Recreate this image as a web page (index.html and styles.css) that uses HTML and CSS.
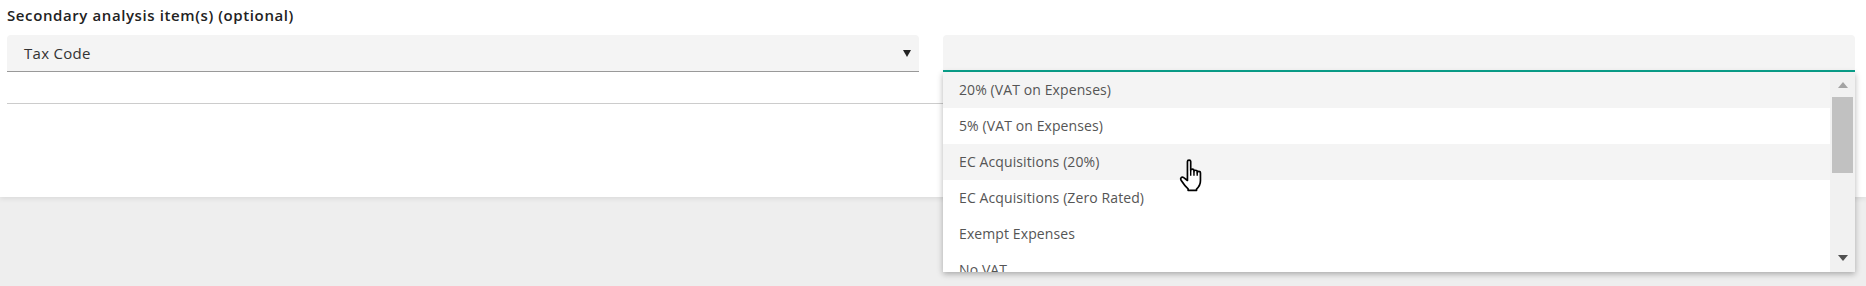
FILE: index.html
```html
<!DOCTYPE html>
<html>

<head>
    <title>Secondary analysis</title>
    <meta charset="utf-8">
    <link rel="stylesheet" href="styles.css">
</head>

<body>

    <div class="kort">
        <h2 class="titel">Secondary analysis item(s) (optional)</h2>

        <div class="felter">
            <div class="vaelg">
                <span>Tax Code</span>
                <span class="pil"></span>
            </div>

            <div class="soeg">
                <div class="soegefelt"></div>

                <div class="liste">
                    <ul>
                        <li class="markeret">20% (VAT on Expenses)</li>
                        <li>5% (VAT on Expenses)</li>
                        <li class="markeret">EC Acquisitions (20%)</li>
                        <li>EC Acquisitions (Zero Rated)</li>
                        <li>Exempt Expenses</li>
                        <li>No VAT</li>
                    </ul>
                    <div class="rulle">
                        <div class="op"></div>
                        <div class="greb"></div>
                        <div class="ned"></div>
                    </div>
                </div>
            </div>
        </div>

        <div class="linje"></div>
    </div>

    <!-- musemarkør -->
    <svg class="haand" width="26" height="34" viewBox="0 0 20 26">
        <path d="M6.5 2.6 C6.5 1.2 9 1.2 9 2.6 L9 9.6 C9 8.2 11.5 8.2 11.5 9.6 L11.5 10.4 C11.5 9 14 9 14 10.4 L14 11.2 C14 9.8 16.5 9.8 16.5 11.2 L16.5 17.5 C16.5 20.5 15 22.5 13.5 23.8 L13.5 24.8 L7 24.8 L7 23.6 C5.2 22 3.4 19.8 1.6 17 C0.6 15.4 2.2 14 3.6 15 L6.5 17.2 Z" fill="#fff" stroke="#000" stroke-width="1.3" stroke-linejoin="round" />
        <path d="M9 10 L9 13.5 M11.5 10.5 L11.5 13.5 M14 11.2 L14 13.5" stroke="#000" stroke-width="1.1" fill="none" />
    </svg>

</body>

</html>
```

FILE: styles.css
```css
body {
    margin: 0;
    background-color: #eeeeee;
    font-family: "Open Sans", Lato, sans-serif;
    position: relative;
    height: 286px;
    overflow: hidden;
}

.kort {
    background-color: #ffffff;
    height: 197px;
    box-sizing: border-box;
    padding: 0 11px 0 7px;
    box-shadow: 0 2px 5px rgba(0, 0, 0, 0.08);
}

.titel {
    margin: 0;
    padding-top: 5px;
    height: 30px;
    font-size: 15px;
    line-height: 20px;
    font-weight: 600;
    letter-spacing: 0.6px;
    color: #222;
}

.felter {
    display: grid;
    grid-template-columns: 1fr 1fr;
    column-gap: 24px;
}

.vaelg {
    height: 36px;
    background-color: #f4f4f4;
    border-bottom: 1px solid #999999;
    border-radius: 4px 4px 0 0;
    display: flex;
    align-items: center;
    justify-content: space-between;
    padding: 0 8px 0 17px;
    font-size: 15px;
    letter-spacing: 0.3px;
    color: #333;
}

.pil {
    width: 0;
    height: 0;
    border-left: 4.5px solid transparent;
    border-right: 4.5px solid transparent;
    border-top: 7px solid #222;
}

.soeg {
    position: relative;
}

.soegefelt {
    height: 35px;
    background-color: #f4f4f4;
    border-bottom: 2px solid #0aa38d;
    border-radius: 4px 4px 0 0;
}

.liste {
    position: absolute;
    top: 37px;
    left: 0;
    right: 0;
    height: 200px;
    background-color: #ffffff;
    box-shadow: 0 2px 6px rgba(0, 0, 0, 0.3);
    display: flex;
    z-index: 2;
}

.liste ul {
    flex: 1;
    margin: 0;
    padding: 0;
    list-style: none;
    overflow: hidden;
}

.liste li {
    height: 36px;
    line-height: 36px;
    padding-left: 16px;
    font-size: 14px;
    letter-spacing: 0.1px;
    color: #555555;
}

.markeret {
    background-color: #f4f4f4;
}

.rulle {
    width: 25px;
    background-color: #f1f1f1;
    display: flex;
    flex-direction: column;
    align-items: center;
}

.op {
    margin-top: 10px;
    width: 0;
    height: 0;
    border-left: 5.5px solid transparent;
    border-right: 5.5px solid transparent;
    border-bottom: 6px solid #a3a3a3;
}

.greb {
    margin-top: 9px;
    width: 21px;
    height: 76px;
    background-color: #c1c1c1;
}

.ned {
    margin-top: auto;
    margin-bottom: 11px;
    width: 0;
    height: 0;
    border-left: 5.5px solid transparent;
    border-right: 5.5px solid transparent;
    border-top: 6px solid #505050;
}

.linje {
    height: 31px;
    border-bottom: 1px solid #cccccc;
}

.haand {
    position: absolute;
    left: 1179px;
    top: 158px;
    z-index: 3;
}
```
